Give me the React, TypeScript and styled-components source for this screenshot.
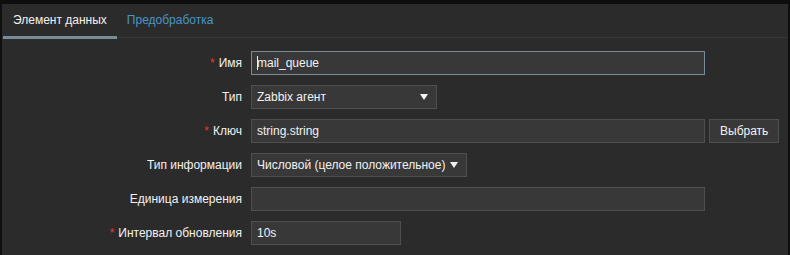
import styled, { createGlobalStyle } from "styled-components";

const GlobalStyle = createGlobalStyle`
  html, body {
    margin: 0;
    padding: 0;
    background: #0e0e0e;
  }
  body {
    font-family: "Liberation Sans", Arial, sans-serif;
    font-size: 12px;
    color: #f2f2f2;
  }
`;

const Frame = styled.div`
  padding: 4px 2px 0 2px;
  height: 255px;
  box-sizing: border-box;
`;

const Panel = styled.div`
  background: #2b2b2b;
  height: 100%;
`;

const Tabs = styled.div`
  display: flex;
  height: 33px;
  padding-left: 1px;
  border-bottom: 1px solid #383838;
`;

const Tab = styled.div<{ $active?: boolean }>`
  display: flex;
  align-items: center;
  padding: 0 10px;
  margin-top: 0;
  box-sizing: border-box;
  color: ${(p) => (p.$active ? "#f2f2f2" : "#4796c4")};
  border-bottom: 3px solid ${(p) => (p.$active ? "#768d99" : "transparent")};
  margin-bottom: -2px;
`;

const Form = styled.div`
  display: grid;
  grid-template-columns: 240px 1fr;
  column-gap: 9px;
  row-gap: 10px;
  padding-top: 13px;
  align-items: center;
`;

const Label = styled.div`
  text-align: right;
`;

const Star = styled.span`
  color: #e33734;
  margin-right: 4px;
`;

const Field = styled.div`
  display: flex;
  align-items: center;
  gap: 4px;
`;

const Input = styled.div<{ $w: number; $focus?: boolean }>`
  width: ${(p) => p.$w}px;
  height: 24px;
  box-sizing: border-box;
  background: #383838;
  border: 1px solid ${(p) => (p.$focus ? "#768d99" : "#4f4f4f")};
  padding: 0 5px;
  display: flex;
  align-items: center;
  color: #f2f2f2;
  white-space: nowrap;
`;

const Caret = styled.span`
  display: inline-block;
  width: 1px;
  height: 14px;
  background: #f2f2f2;
  margin-right: -1px;
`;

const Select = styled(Input)`
  justify-content: space-between;
  padding-right: 8px;
`;

const Arrow = styled.span`
  width: 0;
  height: 0;
  border-left: 4px solid transparent;
  border-right: 4px solid transparent;
  border-top: 6px solid #f2f2f2;
`;

const Button = styled.div`
  height: 24px;
  box-sizing: border-box;
  padding: 0 10px;
  background: #383838;
  border: 1px solid #4f4f4f;
  display: flex;
  align-items: center;
`;

export default function App() {
  return (
    <Frame>
      <GlobalStyle />
      <Panel>
        <Tabs>
          <Tab $active>Элемент данных</Tab>
          <Tab>Предобработка</Tab>
        </Tabs>
        <Form>
          <Label><Star>*</Star>Имя</Label>
          <Field>
            <Input $w={454} $focus><Caret />mail_queue</Input>
          </Field>
          <Label>Тип</Label>
          <Field>
            <Select $w={186}>Zabbix агент<Arrow /></Select>
          </Field>
          <Label><Star>*</Star>Ключ</Label>
          <Field>
            <Input $w={454}>string.string</Input>
            <Button>Выбрать</Button>
          </Field>
          <Label>Тип информации</Label>
          <Field>
            <Select $w={216}>Числовой (целое положительное)<Arrow /></Select>
          </Field>
          <Label>Единица измерения</Label>
          <Field>
            <Input $w={454} />
          </Field>
          <Label><Star>*</Star>Интервал обновления</Label>
          <Field>
            <Input $w={150}>10s</Input>
          </Field>
        </Form>
      </Panel>
    </Frame>
  );
}
